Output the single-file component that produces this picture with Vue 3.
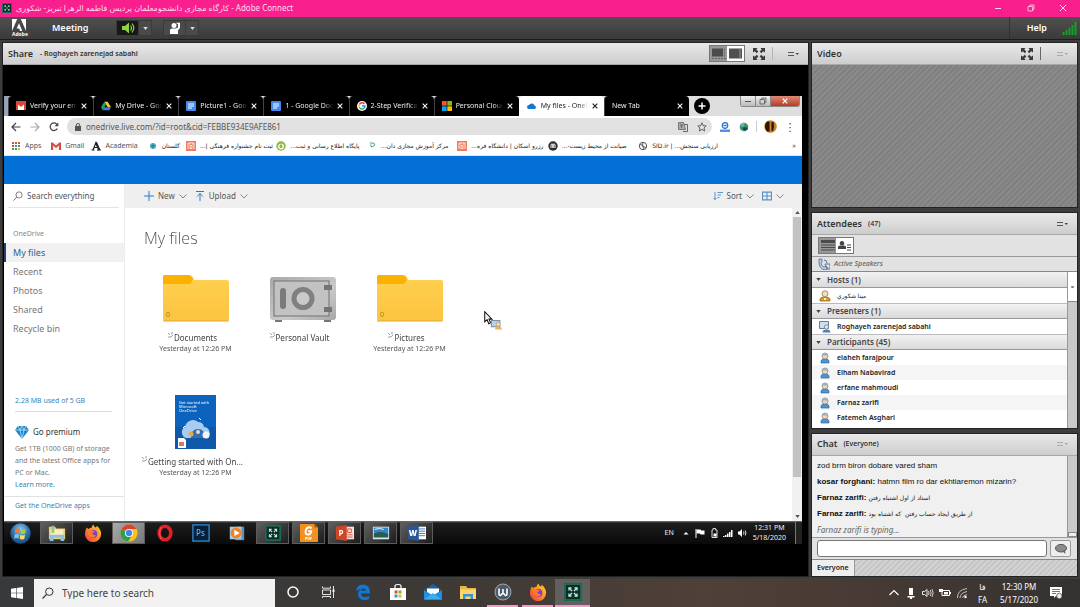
<script setup>
import { ref } from 'vue'

const tabs = [
  { icon: 'gmail', title: 'Verify your email' },
  { icon: 'drive', title: 'My Drive - Google' },
  { icon: 'docs', title: 'Picture1 - Google' },
  { icon: 'docs', title: '1 - Google Docs' },
  { icon: 'google', title: '2-Step Verification' },
  { icon: 'microsoft', title: 'Personal Cloud St' },
  { icon: 'cloud', title: 'My files - OneDrive', active: true },
  { icon: '', title: 'New Tab' },
]
const bookmarks = [
  { icon: 'apps', label: 'Apps' },
  { icon: 'gmail-m', label: 'Gmail' },
  { icon: 'academia', label: 'Academia' },
  { icon: 'golestan', label: 'گلستان', fa: true },
  { icon: 'orange', label: 'ثبت نام جشنواره فرهنگی |...', fa: true },
  { icon: 'green', label: 'پایگاه اطلاع رسانی و ثبت...', fa: true },
  { icon: 'teal', label: 'مرکز آموزش مجازی دان...', fa: true },
  { icon: 'orange', label: 'رزرو اسکان | دانشگاه فره...', fa: true },
  { icon: 'black-m', label: 'صیانت از محیط زیست-...', fa: true },
  { icon: 'globe', label: 'ارزیابی سنجش... | SID.ir', fa: true },
]
const navItems = ['My files', 'Recent', 'Photos', 'Shared', 'Recycle bin']
const files = [
  { icon: 'folder', name: 'Documents', date: 'Yesterday at 12:26 PM' },
  { icon: 'vault', name: 'Personal Vault', date: '' },
  { icon: 'folder', name: 'Pictures', date: 'Yesterday at 12:26 PM' },
  { icon: 'guide', name: 'Getting started with On...', date: 'Yesterday at 12:26 PM' },
]
const innerApps = [
  { icon: 'orb', name: 'Start' },
  { icon: 'explorer7', name: 'Explorer', open: true },
  { icon: 'firefox', name: 'Firefox' },
  { icon: 'chrome', name: 'Chrome', open: true, current: true },
  { icon: 'opera', name: 'Opera' },
  { icon: 'ps', name: 'Photoshop', letter: 'Ps' },
  { icon: 'player', name: 'Media Player' },
  { icon: 'connect', name: 'Adobe Connect', open: true },
  { icon: 'foxit', name: 'PDF reader', letter: 'PDF', open: true },
  { icon: 'ppt', name: 'PowerPoint', letter: 'P', open: true },
  { icon: 'photo', name: 'Photo viewer', open: true },
  { icon: 'word', name: 'Word', letter: 'W', open: true },
]
const outerApps = [
  { icon: 'cortana', name: 'Cortana' },
  { icon: 'taskview', name: 'Task View' },
  { icon: 'edge', name: 'Edge' },
  { icon: 'store', name: 'Store' },
  { icon: 'mail', name: 'Mail' },
  { icon: 'explorer10', name: 'File Explorer' },
  { icon: 'wapp', name: 'W', open: true },
  { icon: 'firefox', name: 'Firefox', open: true },
  { icon: 'connect', name: 'Adobe Connect', open: true, current: true },
]
const groups = [
  { title: 'Hosts (1)', icon: 'host', people: ['مینا شکوري'], fa: true },
  { title: 'Presenters (1)', icon: 'presenter', people: ['Roghayeh zarenejad sabahi'] },
  {
    title: 'Participants (45)',
    icon: 'person',
    people: ['elaheh farajpour', 'Elham Nabavirad', 'erfane mahmoudi', 'Farnaz zarifi', 'Fatemeh Asghari'],
  },
]
const messages = [
  { from: '', text: 'zod brm biron dobare vared sham' },
  { from: 'kosar forghani:', text: 'hatmn film ro dar ekhtiaremon mizarin?' },
  { from: 'Farnaz zarifi:', text: 'استاد از اول اشتباه رفتن', fa: true },
  { from: 'Farnaz zarifi:', text: 'از طریق ایجاد حساب رفتن  که اشتباه بود', fa: true },
]
const draft = ref('')
const query = ref('')
const address = ref('onedrive.live.com/?id=root&cid=FEBBE934E9AFE861')
</script>

<template>
  <svg class="sprite" aria-hidden="true">
    <defs>
      <linearGradient id="g-folder" x1="0" y1="0" x2="0" y2="1"><stop offset="0" stop-color="#ffd050" /><stop offset="1" stop-color="#fcc441" /></linearGradient>
      <linearGradient id="g-vault" x1="0" y1="0" x2="1" y2="1"><stop offset="0" stop-color="#a9a9a9" /><stop offset=".6" stop-color="#c9c9c9" /><stop offset="1" stop-color="#a8a8a8" /></linearGradient>
      <radialGradient id="g-orb" cx=".5" cy=".3" r=".7"><stop offset="0" stop-color="#8cc8e8" /><stop offset=".6" stop-color="#2b6fa8" /><stop offset="1" stop-color="#1b4a7c" /></radialGradient>
      <linearGradient id="g-fire" x1="1" y1="0" x2="0" y2="1"><stop offset="0" stop-color="#ffd43a" /><stop offset=".5" stop-color="#ff8a1f" /><stop offset="1" stop-color="#f0304c" /></linearGradient>
    </defs>
    <symbol id="connect" viewBox="0 0 18 18"><rect width="18" height="18" fill="#0a2f27" /><rect x="1" y="1" width="16" height="16" fill="none" stroke="#23806a" stroke-width="1.4" /><path d="M5 5l8 8M13 5l-8 8" stroke="#c9e6dc" stroke-width="1.200" /><path d="M5 7.500V5h2.500M10.500 5H13v2.500M13 10.500V13h-2.500M7.500 13H5v-2.500" fill="none" stroke="#c9e6dc" stroke-width="1.300" /><circle cx="9" cy="9" r="1.500" fill="#0a2f27" /></symbol>
    <symbol id="adobe" viewBox="0 0 14 12"><path d="M5.200 0 0 12V0zM8.800 0 14 12V0z" fill="#fff" /><path d="M7 4.300 10.300 12H8.100l-1-2.400H4.700z" fill="#fff" /></symbol>
    <symbol id="sound" viewBox="0 0 14 12"><path d="M1 4h3l4-3.500v11L4 8H1z" fill="#8cd63c" /><path d="M9.500 3.500q2 2.500 0 5M11 1.500q3.500 4.500 0 9" fill="none" stroke="#8cd63c" stroke-width="1.200" /></symbol>
    <symbol id="raise" viewBox="0 0 12 12"><circle cx="5" cy="3.500" r="2.500" fill="#fff" /><path d="M1 12V8q0-1.500 2-1.500h3.500L9 5.500 9 2 7.500 1.800V.8H11v5L9 8.500V12z" fill="#fff" /></symbol>
    <symbol id="bars" viewBox="0 0 14 13"><path d="M0 10h2v3H0zM3 8h2v5H3zM6 5.500h2V13H6zM9 3h2v10H9zM12 0h2v13h-2z" fill="#13a02a" /></symbol>
    <symbol id="full" viewBox="0 0 12 12"><path d="M0 0h4.500L3.300 1.600l2 2-1.500 1.600-2-2L0 4.500zM12 0H7.500l1.200 1.600-2 2 1.500 1.600 2-2L12 4.500zM0 12h4.500l-1.200-1.600 2-2-1.500-1.600-2 2L0 7.500zM12 12H7.500l1.200-1.600-2-2 1.500-1.600 2 2L12 7.500z" fill="#3a3a3a" /></symbol>
    <symbol id="menu" viewBox="0 0 11 6"><path d="M0 1.500h6M0 4.500h6" stroke="#555" /><path d="M7.500 2H11L9.200 4z" fill="#444" /></symbol>
    <symbol id="view-a" viewBox="0 0 14 11"><path d="M0 0h11v8H0z" fill="#4c4c4c" /><path d="M12.500 0v9M0 10h14" stroke="#666" stroke-dasharray="2 1" /></symbol>
    <symbol id="view-b" viewBox="0 0 14 11"><path d="M0 0h13v10H0z" fill="#505050" /><path d="M11 0v10" stroke="#999" /></symbol>
    <symbol id="list" viewBox="0 0 14 12"><path d="M0 0h14v3H0zM0 4.500h14v1H0zM0 7h14v1H0zM0 9.500h14v1H0z" fill="#4b4b4b" /></symbol>
    <symbol id="roster" viewBox="0 0 14 12"><circle cx="4" cy="3.200" r="2.200" fill="#444" /><path d="M0 9V7q0-1.500 2-1.500h4q2 0 2 1.500v2z" fill="#444" /><path d="M9 5h4M9 7.500h4M9 10h4" stroke="#444" /></symbol>
    <symbol id="phone" viewBox="0 0 12 12"><path d="M1 1h3v3L3 5q0 3 3 4l2-1 2 2-2 2Q0 12 1 1z" fill="#b9cbe0" stroke="#4f6d92" stroke-width=".8" /><path d="M6 2q3 0 3 3M7 6h5v5H9z" fill="none" stroke="#56779d" /></symbol>
    <symbol id="person" viewBox="0 0 10 12"><path d="M1 11V9q0-2 4-2t4 2v2z" fill="#4c94d2" stroke="#35699f" stroke-width=".7" /><circle cx="5" cy="4" r="3" fill="#f3d7b4" stroke="#7f8790" stroke-width=".8" /><path d="M2 3.500Q2 1 5 1t3 2.500z" fill="#a3afb8" /></symbol>
    <symbol id="host" viewBox="0 0 12 12"><path d="M1 11V9q0-2 5-2t5 2v2z" fill="#d59a32" stroke="#9c6d1a" stroke-width=".8" /><circle cx="6" cy="3.800" r="3" fill="#f3dcc0" stroke="#a07440" stroke-width=".8" /><path d="M5 8h2v2H5z" fill="#fff5d8" /></symbol>
    <symbol id="presenter" viewBox="0 0 12 12"><path d="M.5.500h9v7h-9z" fill="#cfe0ee" stroke="#5e7f9e" /><circle cx="7.500" cy="6" r="2.200" fill="#f3dcc0" stroke="#6f8296" stroke-width=".8" /><path d="M3.500 11.500q0-3 4-3t4 3z" fill="#4c7fb5" /></symbol>
    <symbol id="bubble" viewBox="0 0 12 10"><ellipse cx="6" cy="4.200" rx="5.500" ry="3.800" fill="#8b8b8b" stroke="#555" /><path d="M7 7l3.500 3L10 6z" fill="#666" /></symbol>

    <symbol id="gmail" viewBox="0 0 10 10"><path d="M0 0h10v9H0z" fill="#fff" /><path d="M0 0h10v9H8V3.500L5 6 2 3.500V9H0z" fill="#d9473b" /></symbol>
    <symbol id="gmail-m" viewBox="0 0 10 10"><path d="M0 1.500h10V9H0z" fill="#f6eeee" /><path d="M0 1.500h1.500L5 4.500l3.500-3H10V9H8V4.500L5 7 2 4.500V9H0z" fill="#d54a3e" /></symbol>
    <symbol id="drive" viewBox="0 0 10 10"><path d="M3.300.700h3.400L10 6.300H6.700z" fill="#f8c830" /><path d="M3.300.700 5 3.500 1.700 9.300 0 6.300z" fill="#21a265" /><path d="M3.300 6.300H10L8.300 9.300H1.700z" fill="#3c7de0" /></symbol>
    <symbol id="docs" viewBox="0 0 10 10"><rect width="10" height="10" rx="1" fill="#4489f1" /><path d="M2 3h6M2 5h6M2 7h4" stroke="#fff" /></symbol>
    <symbol id="google" viewBox="0 0 10 10"><circle cx="5" cy="5" r="5" fill="#fff" /><path d="M7.500 3A3 3 0 0 0 2.400 3.500" fill="none" stroke="#ea4335" stroke-width="1.400" /><path d="M2.400 3.500a3 3 0 0 0 0 3" fill="none" stroke="#fbbc05" stroke-width="1.400" /><path d="M2.400 6.500a3 3 0 0 0 4.600.800" fill="none" stroke="#34a853" stroke-width="1.400" /><path d="M5 5h3a3 3 0 0 1-1 2.300" fill="none" stroke="#4285f4" stroke-width="1.400" /></symbol>
    <symbol id="microsoft" viewBox="0 0 10 10"><path d="M0 0h4.700v4.700H0z" fill="#f35325" /><path d="M5.300 0H10v4.700H5.300z" fill="#81bc06" /><path d="M0 5.300h4.700V10H0z" fill="#05a6f0" /><path d="M5.300 5.300H10V10H5.300z" fill="#ffba08" /></symbol>
    <symbol id="cloud" viewBox="0 0 10 10"><path d="M2 8a2 2 0 0 1 0-4 3 3 0 0 1 5.500.500A1.900 1.900 0 0 1 8 8z" fill="#1179d4" /></symbol>
    <symbol id="apps" viewBox="0 0 10 10"><path d="M1 1h2v2H1zM4 1h2v2H4zM1 4h2v2H1z" fill="#dd4b39" /><path d="M7 1h2v2H7zM7 4h2v2H7z" fill="#8a7a40" /><path d="M4 4h2v2H4z" fill="#4285f4" /><path d="M1 7h2v2H1zM4 7h2v2H4z" fill="#2ba24c" /><path d="M7 7h2v2H7z" fill="#efb21c" /></symbol>
    <symbol id="academia" viewBox="0 0 10 10"><path d="M.5 9h3M6 9h4M2 9l3-7.500L8.300 9M3 6.500h4" fill="none" stroke="#222" stroke-width="1.200" /><path d="M5 1.500 8.300 9" stroke="#222" stroke-width="2" /></symbol>
    <symbol id="golestan" viewBox="0 0 10 10"><circle cx="5" cy="5" r="3" fill="#4fb6c4" /><path d="M5 2.500v5M2.500 5h5" stroke="#1c7a92" /></symbol>
    <symbol id="orange" viewBox="0 0 10 10"><rect width="10" height="10" fill="#ee7f5e" /><path d="M2 8V2h6v6M4 4.500h2v3H4zM3 3h1M6 3h1" fill="none" stroke="#fff" stroke-width=".8" /></symbol>
    <symbol id="green" viewBox="0 0 10 10"><circle cx="5" cy="5" r="4.700" fill="#8bb83a" /><circle cx="5" cy="5.500" r="2.300" fill="none" stroke="#fff" stroke-width="1.300" /><path d="M5 1v3" stroke="#8bb83a" /></symbol>
    <symbol id="teal" viewBox="0 0 10 10"><path d="M3 2h3q2 0 1.500 2.500L5 6q-2-.5-1-2.500" fill="none" stroke="#4c9a8a" /></symbol>
    <symbol id="black-m" viewBox="0 0 10 10"><circle cx="5" cy="5" r="4.700" fill="#2c2c2c" /><path d="M3 7V4q0-1 1-1t1 1v3V4q0-1 1-1t1 1v3" fill="none" stroke="#fff" /></symbol>
    <symbol id="globe" viewBox="0 0 10 10"><circle cx="5" cy="5" r="3.700" fill="#fff" stroke="#555" /><path d="M2 3.500q2 .5 3 1.500T8 6.500M5 1.500Q3.500 5 6 8" fill="none" stroke="#555" /></symbol>

    <symbol id="folder" viewBox="0 0 66 48"><path d="M0 2q0-2 2-2h24q4 0 5 5h33q2 0 2 2v37q0 2-2 2H2q-2 0-2-2z" fill="url(#g-folder)" /><path d="M0 2q0-2 2-2h23q3 0 5 4.500L28 8q-1 1-3 1H0z" fill="#fbb102" /><path d="M0 46h66" stroke="#e3a92c" /></symbol>
    <symbol id="vault" viewBox="0 0 66 48"><path d="M5 44h7v3H5zM54 44h7v3h-7z" fill="#777" /><rect y="2" width="66" height="43" rx="3" fill="url(#g-vault)" /><rect x="4" y="6" width="55" height="35" fill="#c2c2c2" stroke="#7e7e7e" stroke-width="1.200" /><rect x="10" y="13" width="6" height="21" rx="3" fill="#7b7b7b" /><circle cx="33" cy="23.500" r="9" fill="#cacaca" stroke="#808080" stroke-width="5" /><path d="M54 10h8v5h-8zM54 32h8v5h-8z" fill="#747474" /></symbol>
    <symbol id="guide" viewBox="0 0 41 54"><path d="M0 0h41v54H0z" fill="#0b63bd" /><path d="M0 32h41v22H0z" fill="#0f57a8" /><path d="M11 43a6 6 0 0 1-1-11 8 8 0 0 1 13-5q5 0 6 5a6 6 0 0 1 3 11z" fill="#a9cdf1" /><path d="M16 43q0-9 7-9t7 9z" fill="#2f6fb3" /><circle cx="16" cy="39" r="2.500" fill="#eda93d" /><circle cx="31" cy="40" r="3.500" fill="#f2f2f2" /><circle cx="23" cy="37" r="2" fill="#f4d9c0" /><path d="M3 43h6l2 2v8H3z" fill="#fff" /><path d="M4 47h5v4H4z" fill="#e3745c" /><path d="M24 23l2 2M10 31l-2 2" stroke="#fff" /></symbol>
    <symbol id="diamond" viewBox="0 0 14 13"><path d="M3 0h8l3 4-7 9-7-9z" fill="#1b86c8" /><path d="M0 4h14M3 0l2 4 2 9 2-9 2-4M5 4l2-4 2 4" fill="none" stroke="#d5ecf9" stroke-width=".7" /></symbol>
    <symbol id="search" viewBox="0 0 12 12"><circle cx="7.300" cy="4.700" r="3.700" fill="none" stroke="currentColor" /><path d="M4.500 7.500.500 11.500" stroke="currentColor" stroke-width="1.100" /></symbol>
    <symbol id="chev" viewBox="0 0 8 5"><path d="M.5.500 4 4 7.500.500" fill="none" stroke="#777" stroke-width=".9" /></symbol>
    <symbol id="plus" viewBox="0 0 10 10"><path d="M5 0v10M0 5h10" stroke="#2b7cc4" /></symbol>
    <symbol id="plus-tab" viewBox="0 0 10 10"><path d="M5 1.500v7M1.500 5h7" stroke="#fff" stroke-width="1.500" /></symbol>
    <symbol id="upload" viewBox="0 0 8 10"><path d="M0 .500h8M4 10V2.500M1 5.500 4 2.500l3 3" fill="none" stroke="#2b7cc4" /></symbol>
    <symbol id="sort" viewBox="0 0 10 8"><path d="M2 0v8M.5 6 2 7.500 3.500 6M4.500.500H10M4.500 3H8M4.500 5.500h2" fill="none" stroke="#5b93cc" /></symbol>
    <symbol id="tiles" viewBox="0 0 9 8"><path d="M.5.500h8v7h-8zM4.500.500v7M.5 4h8" fill="none" stroke="#5b8fc6" /></symbol>
    <symbol id="new" viewBox="0 0 6 6"><path d="M0 1l2 2M4 0v2.500M0 5h3L5 3" fill="none" stroke="#6d9cbb" stroke-width=".9" /></symbol>
    <symbol id="back" viewBox="0 0 10 10"><path d="M9.500 5H1M5 1 1 5l4 4" fill="none" stroke="currentColor" stroke-width="1.200" /></symbol>
    <symbol id="forward" viewBox="0 0 10 10"><path d="M.5 5H9M5 1l4 4-4 4" fill="none" stroke="currentColor" stroke-width="1.200" /></symbol>
    <symbol id="reload" viewBox="0 0 10 10"><path d="M8.300 6.500A3.800 3.800 0 1 1 8 2.500" fill="none" stroke="#444" stroke-width="1.200" /><path d="M9.300.5v3.700H5.600z" fill="#444" /></symbol>
    <symbol id="lock" viewBox="0 0 6 8"><path d="M0 3h6v5H0z" fill="#555" /><path d="M1.300 3V2q0-1.500 1.700-1.500T4.700 2v1" fill="none" stroke="#555" /></symbol>
    <symbol id="translate" viewBox="0 0 10 10"><path d="M.5.500h5l2 7h-7z" fill="#aaa" stroke="#777" /><path d="M6 2.500h3.500v7H5M2 3h3M3.500 3v3" fill="none" stroke="#666" /></symbol>
    <symbol id="star" viewBox="0 0 10 10"><path d="m5 .8 1.200 2.900 3 .2L7 6l.7 3L5 7.400 2.300 9 3 6 .8 3.900l3-.2z" fill="none" stroke="#555" stroke-width=".9" /></symbol>
    <symbol id="ext-a" viewBox="0 0 10 10"><circle cx="5" cy="3.500" r="2.800" fill="#d9eafc" stroke="#2b6fd0" stroke-width="1.200" /><path d="M3.500 3.500h3" stroke="#2b6fd0" /><path d="M0 7.500h10V10H0z" fill="#5b8fdc" /></symbol>
    <symbol id="ext-b" viewBox="0 0 10 10"><circle cx="5" cy="5" r="4.300" fill="#3a9a56" /><path d="M1 3q2-3 5-2L4 5z" fill="#79a7d6" /><path d="M3 6l4-1 2 2-3 2z" fill="#1f3f6e" /></symbol>
    <symbol id="avatar" viewBox="0 0 13 13"><circle cx="6.500" cy="6.500" r="6.300" fill="#c9822c" /><path d="M3 1.500h2.500v10H3q-2-2-2-5t2-5zM7.500 2h2l.5 5-1 4H7.500z" fill="#2a1508" /></symbol>
    <symbol id="pointer" viewBox="0 0 18 18"><path d="M.7.700v9.500l2.200-2L4.500 12l1.700-.8L4.700 7.700h2.800z" fill="#fff" stroke="#111" /><path d="M7 9h8v6H7z" fill="#b7d1ea" stroke="#7a8fa5" /><circle cx="13.500" cy="12.500" r="2" fill="#f1d9a5" stroke="#999" stroke-width=".6" /><path d="M10.500 17.500q0-3 3-3t3.500 3z" fill="#efb44a" /></symbol>

    <symbol id="orb" viewBox="0 0 20 20"><circle cx="10" cy="10" r="9.700" fill="url(#g-orb)" /><path d="M5 6q2.500-1.500 4.500-.5L9 9.500q-2-1-4.500.3z" fill="#ee7d3b" /><path d="M10.500 6q2 1 4.500-.3L14.500 10q-2.500 1-4.500 0z" fill="#a5cf4a" /><path d="M4.300 11q2.500-1.500 4.500-.3L8.200 15q-2-1.300-4.300 0z" fill="#7cc0ee" /><path d="M9.800 11.300q2 1 4.500 0l-.7 4q-2.300 1-4.300-.2z" fill="#fbe05c" /></symbol>
    <symbol id="explorer7" viewBox="0 0 20 20"><path d="M1 3h7l1 2h10v12H1z" fill="#e8cf78" /><path d="M3 6h14v8H3z" fill="#fbf0b8" /><path d="M4 2h3v8H4z" fill="#8fc58a" /><path d="M2 19v-7h16v7h-4v-4H6v4z" fill="#8cc1e4" /></symbol>
    <symbol id="firefox" viewBox="0 0 20 20"><path d="M3 4l2 1.500Q7 4 8.500 4.200 8.500 2 10.500.5q.5 2.500 2.500 3.500 1-.5 1-2 5 4 5 9a9 9 0 0 1-18 .300Q1 7 3 4z" fill="url(#g-fire)" /><circle cx="10.500" cy="11" r="4.300" fill="#7a3fd0" /><path d="M4 8q3-2 6-.500 2 .5 2 1.500l-3 1q1 3 4.500 2.500Q11 16 7.500 14.500 4 12.500 4 8z" fill="#ff7a2e" /></symbol>
    <symbol id="chrome" viewBox="0 0 20 20"><circle cx="10" cy="10" r="9.500" fill="#f9c51a" /><path d="M10 10 1.800 5.200A9.500 9.500 0 0 1 18.200 5.500H10z" fill="#e0402f" /><path d="M1.800 5.200A9.500 9.500 0 0 0 9 19.500l4.500-7z" fill="#2f9e4d" /><circle cx="10" cy="10" r="4.500" fill="#fff" /><circle cx="10" cy="10" r="3.500" fill="#4184f0" /></symbol>
    <symbol id="opera" viewBox="0 0 20 20"><ellipse cx="10" cy="10" rx="6.500" ry="7.500" fill="none" stroke="#e01f2a" stroke-width="4" /><path d="M6 3q-4 7 0 14" fill="none" stroke="#ff5a5a" /></symbol>
    <symbol id="ps" viewBox="0 0 20 20"><rect x="1" y="1" width="18" height="18" fill="#06203c" stroke="#2f86cf" stroke-width="1.500" /></symbol>
    <symbol id="player" viewBox="0 0 20 20"><path d="M8 3h10v15H8z" fill="#5b91b8" /><path d="M2 3h13v14H2z" fill="#a9cbe0" /><circle cx="9" cy="10" r="6" fill="#ee8226" /><path d="M7 6.500v7l6-3.500z" fill="#fff" /></symbol>
    <symbol id="foxit" viewBox="0 0 20 20"><path d="M0 0h16l4 4v16H0z" fill="#f39022" /><path d="M16 0l4 4h-4z" fill="#a85a10" /><path d="M13 4.500Q8 2 6.500 7T9 11.500q3 .5 3.500-3.500H9" fill="none" stroke="#fff" stroke-width="2.200" /></symbol>
    <symbol id="ppt" viewBox="0 0 20 20"><path d="M10 3h10v14H10z" fill="#f5e3de" /><path d="M13 5.500h4v4h-4zM12.500 12h6M12.500 14.500h6" fill="none" stroke="#d0492a" /><path d="M0 3l12-2v18L0 17z" fill="#cf4526" /></symbol>
    <symbol id="word" viewBox="0 0 20 20"><path d="M10 3h10v14H10z" fill="#fff" /><path d="M12 5.500h7M12 8h7M12 10.500h7M12 13h7" stroke="#3a6db5" /><path d="M0 3l12-2v18L0 17z" fill="#2a5699" /></symbol>
    <symbol id="photo" viewBox="0 0 20 20"><path d="M1 3h18v14H1z" fill="#cfe7f4" /><path d="M2 4h16v8H2z" fill="#2f86c9" /><path d="M2 11q6-4 16 0v4H2z" fill="#2f5a48" /><path d="M3 6q5-2 10 0" stroke="#fff" fill="none" /></symbol>

    <symbol id="win" viewBox="0 0 12 12"><path d="M0 1.700 5 1v4.700H0zM5.600.900 12 0v5.700H5.600zM0 6.300h5V11l-5-.7zM5.600 6.300H12V12l-6.400-.9z" fill="#fff" /></symbol>
    <symbol id="cortana" viewBox="0 0 18 18"><circle cx="9" cy="9" r="5" fill="none" stroke="#fff" stroke-width="1.500" /></symbol>
    <symbol id="taskview" viewBox="0 0 18 18"><path d="M3.500 3.500v1.700h8V3.500M3.500 7h8v4.500h-8zM3.500 15v-1.500h8V15M14.500 3v12" fill="none" stroke="#e4e4e4" /><path d="M13.500 6.500h2V9h-2z" fill="#fff" /></symbol>
    <symbol id="edge" viewBox="0 0 18 18"><path d="M2 8q.5-6 7-6.500 7 .5 7 8v1H7q0 3.500 4 3.500 2.500 0 4-1v3q-2 1.200-5 1Q4 16.500 4 11q0-3 3-4.700Q4 6.500 2 8zm5-.2h5Q12 5.500 9.500 5.500T7 7.800z" fill="#1177d3" /></symbol>
    <symbol id="store" viewBox="0 0 18 18"><path d="M6 5V3q0-1.500 3-1.500T12 3v2" fill="none" stroke="#fff" stroke-width="1.200" /><path d="M1 5h16v12H1z" fill="#fff" /><path d="M5.500 7.500h3v3h-3z" fill="#e5502c" /><path d="M9.500 7.500h3v3h-3z" fill="#7bb52e" /><path d="M5.500 11.500h3v3h-3z" fill="#29a0e0" /><path d="M9.500 11.500h3v3h-3z" fill="#f3b41d" /></symbol>
    <symbol id="mail" viewBox="0 0 18 18"><path d="M0 7l9-6 9 6z" fill="#1c5fa8" /><path d="M3 5.500h12v7H3z" fill="#fff" /><path d="M0 7l9 5.500L18 7v9.500H0z" fill="#1f8fe3" /><path d="M0 16.500 9 10l9 6.500z" fill="#39aef0" /></symbol>
    <symbol id="explorer10" viewBox="0 0 18 18"><path d="M1 3h6l1.500 2H17v11H1z" fill="#edb83e" /><path d="M1 6.500h16V16H1z" fill="#fbd86f" /><path d="M4 16v-5h10v5h-2.500v-2.500h-5V16z" fill="#3d92d3" /></symbol>
    <symbol id="wapp" viewBox="0 0 18 18"><circle cx="9" cy="9" r="8" fill="#4d5a68" stroke="#9aa8b6" /><path d="M5 5.500v5.500q0 1.500 1.500 1.500L9 10l2.500 2.500Q13 12.500 13 11V5.500M9 6v4" fill="none" stroke="#fff" stroke-width="1.600" /></symbol>

    <symbol id="t-up" viewBox="0 0 12 12"><path d="M1.500 8 6 3.500 10.500 8" fill="none" stroke="#fff" stroke-width="1.100" /></symbol>
    <symbol id="t-mic" viewBox="0 0 12 12"><path d="M4 1h4v7H4zM2.500 9h7v1.500h-7zM5 10h2v2H5z" fill="#fff" /></symbol>
    <symbol id="t-vol" viewBox="0 0 12 12"><path d="M.5 4.500h2l2.500-2v7l-2.500-2h-2z" fill="none" stroke="#fff" stroke-width=".9" /><path d="M6.500 4q1 2 0 4M8.300 3q1.700 3 0 6M10 2q2.300 4 0 8" fill="none" stroke="#ddd" stroke-width=".9" /></symbol>
    <symbol id="t-bat" viewBox="0 0 12 12"><path d="M3 3.500h7.500v5H3z" fill="none" stroke="#fff" /><path d="M5 5h4v2.500H5zM0 2h4v3H0zM11 5h1v2h-1z" fill="#fff" /></symbol>
    <symbol id="t-wifi" viewBox="0 0 12 12"><path d="M1.500 11Q1 3 11 1.500M4 11q0-5 7-6.500M6.500 11q0-2.500 4.500-3.500" fill="none" stroke="#bdbdbd" /><circle cx="9.500" cy="10" r="1.200" fill="#fff" /></symbol>
    <symbol id="t-note" viewBox="0 0 12 12"><path d="M0 0h12v9H6l-2 2V9H0z" fill="#fff" /><path d="M2 2.500h8M2 4.500h8M2 6.500h4" stroke="#555" stroke-width=".8" /><circle cx="9.300" cy="9" r="2.700" fill="#eee" stroke="#555" stroke-width=".8" /></symbol>
    <symbol id="s-up" viewBox="0 0 10 10"><path d="M2.500 6.500h5L5 4z" fill="#fff" /></symbol>
    <symbol id="s-flag" viewBox="0 0 10 10"><path d="M1 1v9" stroke="#fff" /><path d="M1.500 1.500h4l.5 1h3.500v4H5.500l-.5-1H1.500z" fill="#fff" /></symbol>
    <symbol id="s-bat" viewBox="0 0 10 10"><path d="M4 .500h2.500V2H8v7.500H3V2h1z" fill="none" stroke="#ddd" /><path d="M4.500 5.500h3v3h-3z" fill="#fff" /></symbol>
    <symbol id="s-net" viewBox="0 0 10 10"><path d="M0 8h1.500v1H0zM2 7h1.500v2H2zM4 5.500h1.500V9H4zM6 4h1.500v5H6zM8 2h1.500v7H8z" fill="#fff" /></symbol>
    <symbol id="s-vol" viewBox="0 0 10 10"><path d="M1 3.500h1.500L5 1v8L2.500 6.500H1z" fill="#fff" /><path d="M6.500 3.500q1 1.500 0 3M8.200 2.500q1.500 2.500 0 5" fill="none" stroke="#ddd" /></symbol>
    <symbol id="w-min" viewBox="0 0 10 10"><path d="M2 5.500h6" stroke="currentColor" /></symbol>
    <symbol id="w-max" viewBox="0 0 10 10"><path d="M2 3.500h4.500v4.500H2zM3.800 3.500V2H8v4.300H6.500" fill="none" stroke="currentColor" stroke-width=".8" /></symbol>
    <symbol id="w-x" viewBox="0 0 10 10"><path d="M2 2l6 6M8 2 2 8" stroke="currentColor" /></symbol>
    <symbol id="x" viewBox="0 0 6 6"><path d="M.7.700l4.600 4.600M5.300.700.700 5.300" stroke="currentColor" stroke-width="1.200" /></symbol>
    <symbol id="tri" viewBox="0 0 6 4"><path d="M0 0h6L3 4z" fill="currentColor" /></symbol>
  </svg>

  <div class="window">
    <header class="titlebar">
      <svg class="i10"><use href="#connect" /></svg>
      <h1><bdi dir="rtl">کارگاه مجازی دانشجومعلمان پردیس فاطمه الزهرا تبریز- شکوری</bdi> - Adobe Connect</h1>
      <button aria-label="Minimize"><svg class="i10"><use href="#w-min" /></svg></button>
      <button aria-label="Restore"><svg class="i10"><use href="#w-max" /></svg></button>
      <button aria-label="Close"><svg class="i10"><use href="#w-x" /></svg></button>
    </header>

    <nav class="menubar">
      <div class="brand"><svg><use href="#adobe" /></svg><small>Adobe</small></div>
      <button class="word">Meeting</button>
      <div class="split">
        <button class="lit" aria-label="Speaker"><svg class="i14"><use href="#sound" /></svg></button>
        <button aria-label="Speaker options"><svg class="tri"><use href="#tri" /></svg></button>
      </div>
      <div class="split">
        <button aria-label="Raise hand"><svg class="i12"><use href="#raise" /></svg></button>
        <button aria-label="Status options"><svg class="tri"><use href="#tri" /></svg></button>
      </div>
      <button class="word help">Help</button>
      <svg class="signal"><use href="#bars" /></svg>
    </nav>

    <main class="pods">
      <section class="pod share">
        <header class="podhead">
          <h2>Share</h2><span class="who">- Roghayeh zarenejad sabahi</span>
          <div class="toggle">
            <button class="on" aria-label="Fit"><svg class="i14"><use href="#view-a" /></svg></button>
            <button aria-label="Fill"><svg class="i14"><use href="#view-b" /></svg></button>
          </div>
          <button class="plain" aria-label="Full screen"><svg class="i12"><use href="#full" /></svg></button>
          <span class="bar"></span>
          <button class="plain opts" aria-label="Share options"><svg class="menu"><use href="#menu" /></svg></button>
        </header>
        <div class="stage">
          <div class="screen">
            <div class="tabstrip">
              <div class="tabs">
                <button v-for="t in tabs" :key="t.title" class="tab" :class="{ active: t.active }">
                  <svg v-if="t.icon" class="i10"><use :href="'#' + t.icon" /></svg>
                  <span>{{ t.title }}</span>
                  <svg class="i6"><use href="#x" /></svg>
                </button>
              </div>
              <button class="newtab" aria-label="New tab"><svg class="i10"><use href="#plus-tab" /></svg></button>
              <div class="caption">
                <button aria-label="Minimize"><svg class="i10"><use href="#w-min" /></svg></button>
                <button aria-label="Restore"><svg class="i10"><use href="#w-max" /></svg></button>
                <button class="close" aria-label="Close"><svg class="i6"><use href="#x" /></svg></button>
              </div>
            </div>

            <div class="toolbar">
              <button aria-label="Back"><svg class="i10"><use href="#back" /></svg></button>
              <button class="dim" aria-label="Forward"><svg class="i10"><use href="#forward" /></svg></button>
              <button aria-label="Reload"><svg class="i10"><use href="#reload" /></svg></button>
              <div class="omnibox">
                <svg class="lock"><use href="#lock" /></svg>
                <input v-model="address" aria-label="Address" />
                <svg class="i10"><use href="#translate" /></svg>
                <svg class="i10"><use href="#star" /></svg>
              </div>
              <svg class="i10"><use href="#ext-a" /></svg>
              <svg class="i10"><use href="#ext-b" /></svg>
              <span class="bar"></span>
              <svg class="i13"><use href="#avatar" /></svg>
              <button class="kebab" aria-label="Menu">⋮</button>
            </div>

            <div class="bookmarks">
              <a v-for="b in bookmarks" :key="b.label" href="#" :class="{ fa: b.fa }">
                <svg class="i10"><use :href="'#' + b.icon" /></svg><span :dir="b.fa ? 'rtl' : 'ltr'">{{ b.label }}</span>
              </a>
              <button aria-label="More bookmarks">»</button>
            </div>

            <div class="suite"></div>

            <div class="drive">
              <aside>
                <label class="find"><svg class="i10"><use href="#search" /></svg><input v-model="query" placeholder="Search everything" /></label>
                <p class="label">OneDrive</p>
                <a v-for="(n, i) in navItems" :key="n" href="#" class="nav" :class="{ sel: i === 0 }">{{ n }}</a>
                <div class="quota">
                  <a href="#">2.28 MB used of 5 GB</a>
                  <hr />
                  <p class="premium"><svg class="gem"><use href="#diamond" /></svg>Go premium</p>
                  <p class="pitch">Get 1TB (1000 GB) of storage and the latest Office apps for PC or Mac.</p>
                  <a href="#">Learn more.</a>
                </div>
                <a href="#" class="getapps">Get the OneDrive apps</a>
              </aside>
              <div class="content">
                <div class="commands">
                  <button><svg class="i10"><use href="#plus" /></svg>New<svg class="chev"><use href="#chev" /></svg></button>
                  <button><svg class="i10"><use href="#upload" /></svg>Upload<svg class="chev"><use href="#chev" /></svg></button>
                  <button class="right"><svg class="i10"><use href="#sort" /></svg>Sort<svg class="chev"><use href="#chev" /></svg></button>
                  <button aria-label="View"><svg class="i10"><use href="#tiles" /></svg><svg class="chev"><use href="#chev" /></svg></button>
                </div>
                <div class="listing">
                  <div class="files">
                    <h3>My files</h3>
                    <ul>
                      <li v-for="f in files" :key="f.name">
                        <div class="thumb">
                          <svg :class="f.icon"><use :href="'#' + f.icon" /></svg>
                          <span v-if="f.icon === 'folder'" class="count">0</span>
                          <span v-if="f.icon === 'guide'" class="cover">Get started with Microsoft OneDrive</span>
                        </div>
                        <p class="name"><svg class="spark"><use href="#new" /></svg>{{ f.name }}</p>
                        <p class="date">{{ f.date }}</p>
                      </li>
                    </ul>
                    <svg class="pointer"><use href="#pointer" /></svg>
                  </div>
                  <div class="scroll"><svg class="arrow up"><use href="#tri" /></svg><i></i><svg class="arrow"><use href="#tri" /></svg></div>
                </div>
              </div>
            </div>

            <div class="innerbar">
              <button v-for="a in innerApps" :key="a.name" :class="{ open: a.open, current: a.current }" :aria-label="a.name">
                <span class="app" :class="a.icon"><svg><use :href="'#' + a.icon" /></svg><b v-if="a.letter">{{ a.letter }}</b></span>
              </button>
              <div class="innertray">
                <span class="lang">EN</span>
                <svg v-for="s in ['s-up', 's-flag', 's-bat', 's-net', 's-vol']" :key="s" class="i10"><use :href="'#' + s" /></svg>
                <time>12:31 PM<br />5/18/2020</time>
                <span class="peek"></span>
              </div>
            </div>
          </div>
        </div>
      </section>

      <div class="side">
        <section class="pod">
          <header class="podhead">
            <h2>Video</h2>
            <button class="plain push" aria-label="Full screen"><svg class="i12"><use href="#full" /></svg></button>
            <span class="bar dark"></span>
            <button class="plain opts faint" aria-label="Video options"><svg class="menu"><use href="#menu" /></svg></button>
          </header>
          <div class="video"></div>
        </section>

        <section class="pod">
          <header class="podhead">
            <h2>Attendees</h2><span class="count">(47)</span>
            <button class="plain opts push" aria-label="Attendee options"><svg class="menu"><use href="#menu" /></svg></button>
          </header>
          <div class="views">
            <div class="toggle">
              <button class="on" aria-label="Attendee view"><svg class="i14"><use href="#list" /></svg></button>
              <button aria-label="Breakout view"><svg class="i14"><use href="#roster" /></svg></button>
            </div>
          </div>
          <p class="speakers"><svg class="i12"><use href="#phone" /></svg>Active Speakers</p>
          <div class="rosterwrap">
            <div class="roster">
              <template v-for="g in groups" :key="g.title">
                <h3><svg class="tri"><use href="#tri" /></svg>{{ g.title }}</h3>
                <ul>
                  <li v-for="p in g.people" :key="p" :class="{ fa: g.fa }"><svg class="i12"><use :href="'#' + g.icon" /></svg>{{ p }}</li>
                </ul>
              </template>
            </div>
            <div class="track"><i>=</i></div>
          </div>
        </section>

        <section class="pod chat">
          <header class="podhead">
            <h2>Chat</h2><span class="count">(Everyone)</span>
            <button class="plain opts push faint" aria-label="Chat options"><svg class="menu"><use href="#menu" /></svg></button>
          </header>
          <div class="log">
            <div class="lines">
              <p v-for="m in messages" :key="m.text"><b v-if="m.from">{{ m.from }}&nbsp;</b><bdi :class="{ fa: m.fa }">{{ m.text }}</bdi></p>
              <p class="typing">Farnaz zarifi is typing...</p>
            </div>
            <div class="track"><b></b></div>
          </div>
          <form class="compose" @submit.prevent>
            <input v-model="draft" aria-label="Message" autofocus />
            <button aria-label="Send"><svg class="i12"><use href="#bubble" /></svg></button>
          </form>
          <div class="chattabs"><button>Everyone</button></div>
        </section>
      </div>
    </main>

    <footer class="taskbar">
      <button class="start" aria-label="Start"><svg class="i12"><use href="#win" /></svg></button>
      <label class="winsearch"><svg class="i12"><use href="#search" /></svg><input placeholder="Type here to search" /></label>
      <button v-for="a in outerApps" :key="a.name" class="task" :class="{ open: a.open, current: a.current }" :aria-label="a.name">
        <svg><use :href="'#' + a.icon" /></svg>
      </button>
      <div class="tray">
        <svg v-for="s in ['t-up', 't-mic', 't-vol', 't-bat', 't-wifi']" :key="s" class="i12"><use :href="'#' + s" /></svg>
        <span class="lang">فا<br />FA</span>
        <time>12:30 PM<br />5/17/2020</time>
        <svg class="i12"><use href="#t-note" /></svg>
      </div>
    </footer>
  </div>
</template>

<style>
html, body, #app { height: 100%; margin: 0; }
body { overflow: hidden; }
</style>

<style scoped>
.window { display: flex; flex-direction: column; height: 100vh; background: #3d3d3d; font: 8px/12px "Noto Sans", "DejaVu Sans", sans-serif; color: #222; overflow: hidden; }
.window * { box-sizing: border-box; }
.sprite { position: absolute; width: 0; height: 0; }
button { border: 0; padding: 0; margin: 0; background: none; font: inherit; color: inherit; display: flex; align-items: center; justify-content: center; }
input { border: 0; padding: 0; margin: 0; background: none; font: inherit; color: inherit; outline: 0; min-width: 0; }
h1, h2, h3, p, ul { margin: 0; padding: 0; font-size: inherit; font-weight: inherit; list-style: none; }
a { color: inherit; text-decoration: none; }
svg { flex: none; display: block; }
.i6 { width: 6px; height: 6px; }
.i10 { width: 10px; height: 10px; }
.i12 { width: 12px; height: 12px; }
.i13 { width: 13px; height: 13px; }
.i14 { width: 14px; height: 12px; }
.tri { width: 5px; height: 3px; }
.menu { width: 11px; height: 6px; }

.titlebar { flex: none; height: 17px; display: flex; align-items: center; padding: 0 5px 1px 2px; background: #f9208e; color: #ffd9ee; }
.titlebar h1 { flex: 1; margin-left: 4px; font-size: 8px; white-space: nowrap; }
.titlebar button { width: 33px; height: 16px; }
.titlebar button:last-child { width: 24px; margin-left: 4px; }

.menubar { flex: none; height: 23px; display: flex; align-items: center; padding: 0 3px 0 12px; background: linear-gradient(#505050, #3a3a3a); border-bottom: 1px solid #1c1c1c; color: #fff; }
.brand { width: 14px; margin-right: 26px; }
.brand svg { width: 14px; height: 12px; }
.brand small { display: block; font-size: 5px; line-height: 6px; font-weight: 700; }
.word { font-size: 9px; font-weight: 600; }
.split { display: flex; margin-left: 28px; height: 16px; background: #4a4a4a; border: 1px solid #3a3a3a; }
.split + .split { margin-left: 11px; }
.split button { width: 12px; color: #ddd; }
.split button:first-child { width: 22px; border-right: 1px solid #3a3a3a; }
.split .lit { background: #181818; }
.help { margin-left: auto; height: 22px; padding-left: 17px; border-left: 1px solid #333; }
.signal { width: 15px; height: 13px; margin-left: 15px; }

.pods { flex: 1; min-height: 0; display: grid; grid-template-columns: minmax(0, 805fr) minmax(0, 265fr); gap: 4px; padding: 3px; }
.side { display: grid; grid-template-rows: 164fr 214fr 142fr; gap: 6px; min-height: 0; }
.pod { display: flex; flex-direction: column; min-height: 0; min-width: 0; overflow: hidden; background: #e2e2e2; outline: 1px solid #232323; }
.podhead { flex: none; height: 22px; display: flex; align-items: center; padding: 0 9px 0 5px; background: linear-gradient(#e9e9e9, #cdcdcd); border-bottom: 1px solid #a8a8a8; }
.podhead h2 { font-size: 9px; font-weight: 600; color: #333; }
.podhead .who { margin-left: 7px; font-size: 7px; font-weight: 600; color: #333; }
.podhead .count { margin-left: 6px; font-size: 7px; font-weight: 500; }
.podhead .bar { width: 1px; height: 13px; background: #b5b5b5; margin: 0 15px 0 7px; }
.podhead .bar.dark { background: #666; margin-right: 16px; }
.push { margin-left: auto; }
.podhead .faint { opacity: .35; }
.toggle { display: flex; border: 1px solid #777; background: #fff; }
.toggle button { width: 17px; height: 15px; }
.toggle .on { background: #979797; }
.share .toggle { margin: 0 8px 0 auto; }
.stage { flex: 1; min-height: 0; display: flex; flex-direction: column; padding: 31px 6px 32px 1px; background: #000; }
.screen { flex: 1; min-height: 0; display: flex; flex-direction: column; background: #fff; }

.tabstrip { flex: none; height: 20px; display: flex; align-items: center; background: linear-gradient(90deg, #8ea0b8, #dedede 4%); padding-left: 4px; }
.tabs { flex: 0 1 681px; display: flex; height: 20px; min-width: 0; }
.tab { flex: 1; min-width: 0; background: #000; color: #eee; gap: 4px; padding: 0 6px 0 7px; border-left: 1px solid #444; border-radius: 4px 4px 0 0; }
.tab span { flex: 1; overflow: hidden; white-space: nowrap; text-align: left; font-size: 7px; mask-image: linear-gradient(90deg, #000 80%, transparent); }
.tab.active { background: #fff; color: #222; border-color: #fff; }
.newtab { width: 16px; height: 16px; margin: 0 0 0 5px; border-radius: 8px; background: #000; }
.caption { display: flex; align-self: flex-start; margin: 0 2px 0 auto; border: 1px solid #888; border-top: 0; border-radius: 0 0 3px 3px; overflow: hidden; color: #555; }
.caption button { width: 15px; height: 10px; background: linear-gradient(#eee, #bbb); border-right: 1px solid #888; }
.caption .close { width: 28px; border: 0; color: #fff; background: linear-gradient(#dc8a78, #bb3a22); }

.toolbar { flex: none; height: 21px; display: flex; align-items: center; gap: 9px; padding: 0 8px 0 7px; color: #444; }
.toolbar .dim { color: #aaa; }
.toolbar .bar { width: 1px; height: 11px; background: #ccc; margin: 0 -2px; }
.omnibox { flex: 1; display: flex; align-items: center; gap: 9px; height: 17px; margin: 0 -1px 0 -1px; padding: 0 5px 0 8px; border-radius: 9px; background: #e1e1e1; }
.omnibox input { flex: 1; font-size: 8px; color: #555; }
.lock { width: 6px; height: 8px; margin-right: -4px; }
.kebab { font-size: 11px; width: 8px; }

.bookmarks { flex: none; height: 19px; display: grid; grid-template-columns: 40fr 40fr 56fr 38fr 90fr 90fr 90fr 90fr 90fr 147fr 16px; align-items: center; padding-left: 7px; border-bottom: 1px solid #cdeaff; font-size: 7px; color: #555; }
.bookmarks a { display: flex; align-items: center; gap: 4px; min-width: 0; white-space: nowrap; }
.bookmarks .fa { font-family: "DejaVu Sans", sans-serif; font-size: 6px; color: #222; }
.suite { flex: none; height: 28px; background: #0370d8; }

.drive { flex: 1; min-height: 0; display: grid; grid-template-columns: 121px minmax(0, 1fr); color: #555; }
aside { display: flex; flex-direction: column; border-right: 1px solid #ececec; min-height: 0; }
.find { display: flex; align-items: center; gap: 4px; height: 24px; margin: 0 5px 0 4px; padding-left: 5px; border-bottom: 1px solid #e4e4e4; color: #666; }
.find input { flex: 1; }
.find input::placeholder { color: #555; opacity: 1; }
.label { margin: 20px 0 3px 9px; font-size: 7px; color: #888; }
.nav { height: 19px; line-height: 19px; padding-left: 9px; font-size: 9px; color: #777; }
.sel { background: #f1f1f1; color: #2a6396; box-shadow: inset 2px 0 #27406b; }
.quota { margin: auto 12px 0 11px; padding-bottom: 5px; font-size: 7px; }
.quota a, .getapps { color: #3a84b4; }
.quota hr { border: 0; border-top: 1px solid #d8dde2; margin: 4px 0 12px; }
.premium { display: flex; align-items: center; gap: 4px; height: 16px; margin-bottom: 3px; color: #333; font-size: 8px; }
.gem { width: 14px; height: 13px; }
.pitch { color: #777; }
.getapps { padding: 3px 0 9px 11px; border-top: 1px solid #e2e2e2; font-size: 7px; }
.content { display: flex; flex-direction: column; min-width: 0; min-height: 0; }
.commands { flex: none; height: 24px; display: flex; align-items: center; gap: 8px; padding: 0 18px 0 19px; background: #efefef; }
.commands button { gap: 4px; }
.commands .right { margin-left: auto; }
.chev { width: 8px; height: 5px; }
.listing { flex: 1; min-height: 0; display: flex; }
.files { flex: 1; position: relative; overflow: hidden; padding: 19px 0 0 17px; }
.files h3 { font: 300 16px/22px "Open Sans", "Noto Sans", sans-serif; color: #555; padding-left: 2px; }
.files ul { display: grid; grid-template-columns: repeat(3, 107px); row-gap: 16px; margin-top: 26px; }
.files li { text-align: center; white-space: nowrap; height: 108px; }
.thumb { position: relative; display: flex; flex-direction: column; align-items: center; justify-content: flex-end; height: 55px; margin-bottom: 2px; }
.thumb svg { width: 66px; height: 48px; margin-bottom: 7px; }
.thumb .guide { width: 41px; height: 54px; margin-bottom: 5px; }
.thumb .count { position: absolute; left: 24px; bottom: 9px; font-size: 7px; color: #a57817; }
.thumb .cover { position: absolute; left: 37px; top: 2px; width: 36px; font-size: 4px; line-height: 4px; text-align: left; color: #fff; white-space: normal; }
.name { font-size: 8px; line-height: 12px; color: #444; display: flex; justify-content: center; }
.spark { width: 6px; height: 6px; margin-left: -6px; }
.date { font-size: 7px; line-height: 10px; }
.pointer { position: absolute; left: 359px; top: 103px; width: 19px; height: 19px; }
.scroll { width: 10px; display: flex; flex-direction: column; align-items: center; padding: 3px 1px; background: #f1f1f1; }
.scroll i { width: 8px; flex: 0 1 260px; margin: 3px 0 auto; background: #c3c3c3; }
.arrow { width: 5px; height: 3px; color: #555; }
.arrow.up { transform: rotate(180deg); }

.innerbar { flex: none; height: 23px; display: flex; align-items: stretch; background: linear-gradient(#7b7b7b 0, #1d1d1d 2px, #0a0a0a); color: #eee; }
.innerbar button { width: 33px; margin: 1px 3px 0 0; border: 1px solid transparent; }
.innerbar .open { background: linear-gradient(135deg, #5e5e5e, #1d1d1d); border-color: #5c5c5c; }
.innerbar .current { background: linear-gradient(135deg, #aaa, #777); }
.app { position: relative; width: 18px; height: 18px; }
.app svg { width: 100%; height: 100%; }
.app.orb { width: 21px; height: 21px; }
.app.connect { width: 16px; height: 16px; }
.app b { position: absolute; inset: 0 7px 0 0; font-size: 8px; line-height: 18px; text-align: center; color: #fff; }
.app.ps b { inset: 0; font-weight: 500; color: #58b3f4; }
.app.foxit b { inset: 12px 0 0; font-size: 4px; line-height: 6px; }
.innertray { margin-left: auto; display: flex; align-items: center; gap: 4px; font-size: 7px; line-height: 10px; text-align: center; }
.innertray .lang { margin-right: 3px; }
.innertray time { margin: 0 5px 0 2px; }
.peek { width: 7px; height: 22px; border-left: 1px solid #777; background: #222; }

.video { flex: 1; background: repeating-linear-gradient(135deg, #8a8a8a 0 2px, #808080 2px 4px); }
.views { flex: none; height: 22px; padding: 2px 6px; border-bottom: 1px solid #999; }
.views .toggle { width: 36px; }
.speakers { flex: none; height: 15px; display: flex; align-items: center; gap: 4px; padding-left: 6px; font-size: 7px; font-style: italic; font-weight: 500; color: #666; border-bottom: 1px solid #888; }
.rosterwrap { flex: 1; min-height: 0; display: flex; }
.roster { flex: 1; overflow: hidden; background: #fff; font-weight: 600; }
.roster h3 { height: 16px; display: flex; align-items: center; gap: 6px; padding-left: 4px; background: linear-gradient(#f2f2f2, #dadada); border-bottom: 1px solid #999; color: #444; }
.roster ul + h3 { border-top: 1px solid #bbb; }
.roster li { height: 15px; display: flex; align-items: center; gap: 6px; padding-left: 7px; font-size: 7px; }
.roster li:nth-child(even) { background: #f5f5f5; }
.roster .fa { font-size: 6px; font-weight: 400; }
.track { width: 10px; background: #c9c9c9; border-left: 1px solid #999; display: flex; flex-direction: column; }
.track i { height: 30px; line-height: 30px; background: #fff; border-bottom: 1px solid #888; text-align: center; font-size: 6px; font-style: normal; }
.track b { margin-top: auto; height: 5px; background: #eee; border: 1px solid #888; }
.log { flex: 1; min-height: 0; display: flex; border-bottom: 1px solid #999; background: #f0f0f0; }
.lines { flex: 1; overflow: hidden; padding: 2px 5px 0; font: 8px/16px "Liberation Sans", "DejaVu Sans", sans-serif; white-space: pre; color: #111; }
.lines p { height: 16px; }
.lines .fa { font-family: "DejaVu Sans", sans-serif; font-size: 6px; }
.lines .typing { font: italic 8px/16px "Noto Sans", sans-serif; color: #666; }
.compose { flex: none; height: 22px; display: flex; align-items: center; gap: 3px; padding: 0 6px 0 5px; border-bottom: 1px solid #888; }
.compose input { flex: 1; height: 17px; padding: 0 2px; border: 1px solid #777; border-radius: 3px; background: #fff; }
.compose button { width: 21px; height: 17px; border: 1px solid #999; border-radius: 2px; background: #eee; }
.chattabs { flex: none; height: 16px; display: flex; background: repeating-linear-gradient(135deg, #d2d2d2 0 2px, #c6c6c6 2px 4px); }
.chattabs button { padding: 0 5px; background: #eee; border-right: 1px solid #999; font-size: 7px; font-weight: 600; }

.taskbar { flex: none; height: 28px; display: flex; align-items: stretch; background: linear-gradient(90deg, #373a3d, #3d3935 40%, #4f4038 65%, #483a34 80%, #333231); color: #fff; }
.start { width: 34px; }
.winsearch { width: 241px; display: flex; align-items: center; gap: 8px; padding-left: 8px; background: #f2f2f2; color: #333; }
.winsearch input { flex: 1; font-size: 10px; }
.winsearch input::placeholder { color: #444; opacity: 1; }
.task { width: 35px; border-bottom: 2px solid transparent; }
.task svg { width: 18px; height: 18px; }
.task.open { border-image: linear-gradient(90deg, transparent 10%, #f49ac8 10%, #f49ac8 90%, transparent 90%) 2; }
.task.current { background: #62605c; border-image: none; border-color: #f49ac8; }
.tray { margin-left: auto; display: flex; align-items: center; gap: 5px; padding-right: 18px; font-size: 8px; line-height: 13px; text-align: center; }
.tray .lang { margin: 0 8px 0 5px; }
.tray time { margin-right: 7px; }
</style>
